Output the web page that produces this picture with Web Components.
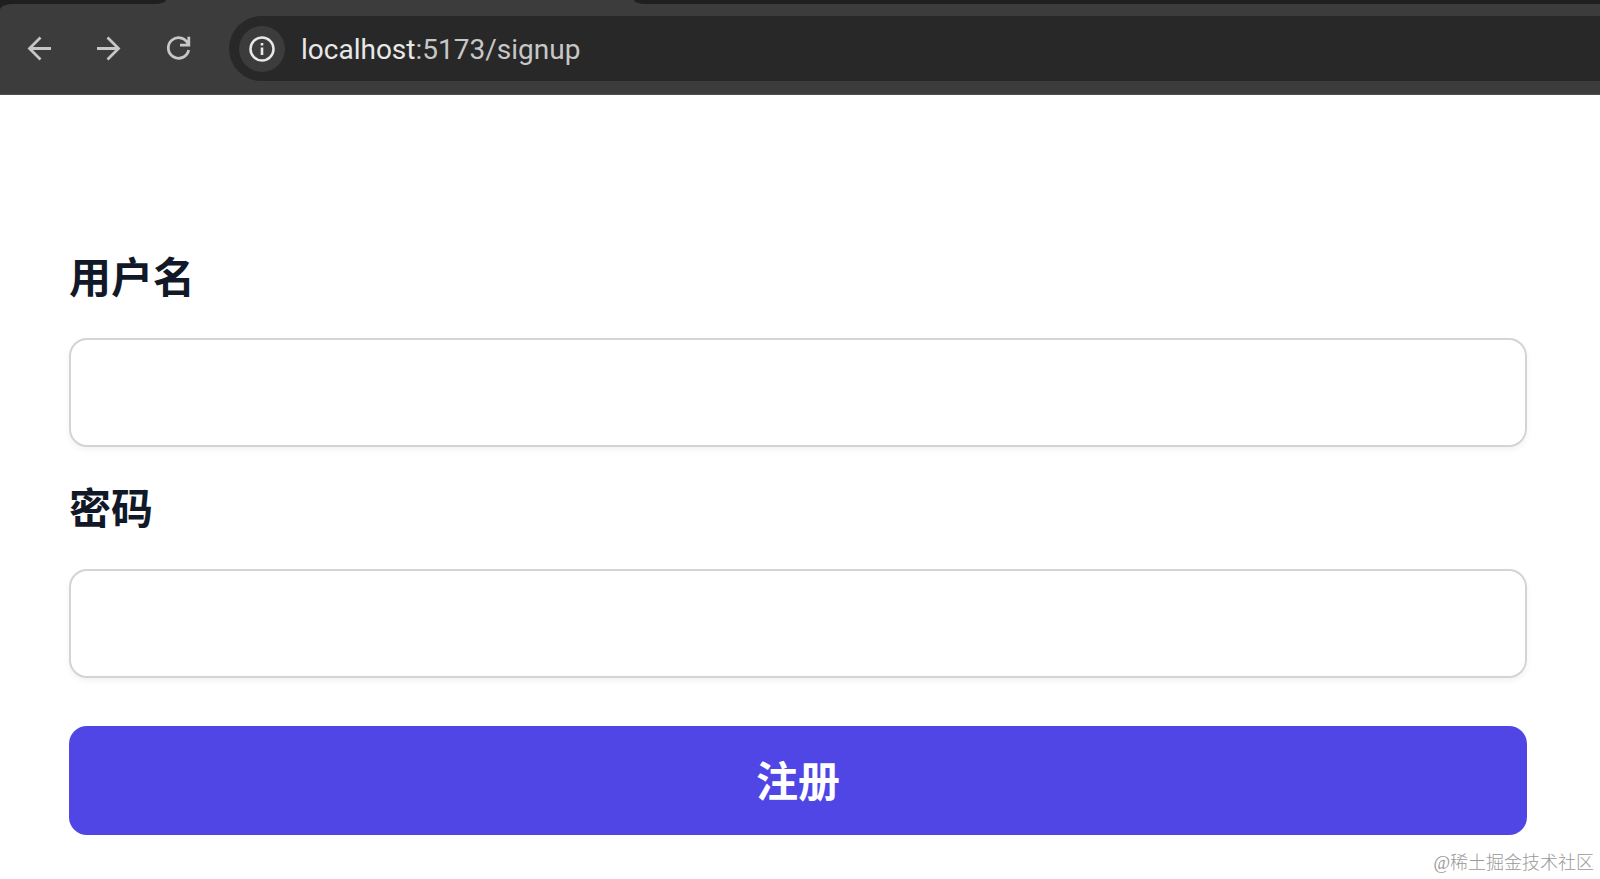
<!DOCTYPE html>
<html lang="zh-CN">
<head>
<meta charset="utf-8">
<meta name="viewport" content="width=device-width, initial-scale=1">
<title>注册</title>
<style>
  html, body { margin: 0; min-height: 100%; background: #fff; }
  body { font-family: "Noto Sans CJK SC", sans-serif; color: #111827; }
</style>
</head>
<body>
<browser-bar>
  <tool-button slot="nav" label="Back">
    <svg viewBox="0 0 33 33" fill="none" stroke="currentColor" stroke-width="2.8"><path d="M28 16.500H7M17.500 5.500 6.500 16.500l11 11"/></svg>
  </tool-button>
  <tool-button slot="nav" label="Forward">
    <svg viewBox="0 0 33 33" fill="none" stroke="currentColor" stroke-width="2.800"><path d="M4 16.500h21M14.500 5.500l11 11-11 11"/></svg>
  </tool-button>
  <tool-button slot="nav" label="Reload">
    <svg viewBox="0 0 33 33" fill="none" stroke="currentColor" stroke-width="2.800"><path d="M25.300 12.500A10.300 10.300 0 1 0 25.700 18M25.800 4.800v8.300H17"/></svg>
  </tool-button>
  <address-box host="localhost" path=":5173/signup"></address-box>
</browser-bar>
<signup-form>
  <form-field name="username" type="text">用户名</form-field>
  <form-field name="password" type="password">密码</form-field>
  <submit-button slot="action">注册</submit-button>
</signup-form>
<page-credit>@稀土掘金技术社区</page-credit>

<script>
  const define = (name, html, setup) => {
    const template = document.createElement('template');
    template.innerHTML = html;
    customElements.define(name, class extends HTMLElement {
      constructor() {
        super();
        this.attachShadow({ mode: 'open' }).append(template.content.cloneNode(true));
      }
      connectedCallback() {
        if (setup) setup(this, this.shadowRoot);
      }
    });
  };

  define('browser-bar', `
    <style>
      :host { display: block; background: #1f1f1f; color: #c7c7c7; }
      .strip { display: flex; height: 4px; background: #3c3c3c; }
      .before { width: 166px; background: #1f1f1f; border-bottom-right-radius: 12px 4px; }
      .active { width: 468px; }
      .after { flex: 1; background: #1f1f1f; border-bottom-left-radius: 12px 4px; }
      .tools { display: flex; align-items: center; box-sizing: border-box; height: 91px; padding: 12px 0 13px 23px; border-bottom: 1px solid #505050; border-top-left-radius: 12px 6px; background: #3c3c3c; }
      nav { display: flex; gap: 37px; margin-right: 33px; }
      ::slotted(address-box) { flex: 1; }
    </style>
    <div class="strip"><div class="before"></div><div class="active"></div><div class="after"></div></div>
    <div class="tools"><nav aria-label="Navigation"><slot name="nav"></slot></nav><slot></slot></div>
  `);

  define('tool-button', `
    <style>
      :host { display: block; }
      button { display: flex; width: 33px; height: 33px; padding: 0; border: 0; background: none; color: inherit; }
      ::slotted(svg) { width: 33px; height: 33px; }
    </style>
    <button type="button"><slot></slot></button>
  `, (host, root) => root.querySelector('button').setAttribute('aria-label', host.getAttribute('label')));

  define('address-box', `
    <style>
      :host { display: flex; align-items: center; gap: 16px; box-sizing: border-box; height: 65px; padding-left: 10px; background: #282828; border-radius: 33px 0 0 33px; font: 28px/36px Roboto, sans-serif; color: #c7c7c7; }
      button { display: flex; align-items: center; justify-content: center; width: 46px; height: 46px; padding: 0; border: 0; border-radius: 50%; background: #3c3c3c; color: #e8e8e8; }
      svg { width: 28px; height: 28px; }
      .url { flex: 1; padding-top: 2px; white-space: nowrap; }
      .host { color: #e8e8e8; }
    </style>
    <button type="button" aria-label="Site information">
      <svg viewBox="0 0 28 28"><circle cx="14" cy="14" r="11.500" fill="none" stroke="currentColor" stroke-width="2.500"/><path d="M12.700 12.500h2.600v7.500h-2.600zM12.700 8h2.600v2.600h-2.600z" fill="currentColor"/></svg>
    </button>
    <div class="url" role="textbox" aria-label="Address"><span class="host"></span><span class="path"></span></div>
  `, (host, root) => {
    root.querySelector('.host').textContent = host.getAttribute('host');
    root.querySelector('.path').textContent = host.getAttribute('path');
  });

  define('signup-form', `
    <style>
      :host { display: block; padding: 145px 73px 0 69px; }
      form { display: flex; flex-direction: column; gap: 48px; }
      .fields { display: flex; flex-direction: column; gap: 24px; }
    </style>
    <form><div class="fields"><slot></slot></div><slot name="action"></slot></form>
  `);

  define('form-field', `
    <style>
      :host { display: flex; flex-direction: column; gap: 28px; }
      label { font-size: 42px; font-weight: 700; line-height: 70px; }
      input { box-sizing: border-box; width: 100%; height: 109px; padding: 0 36px; border: 2px solid #d4d4d8; border-radius: 18px; background: #fff; box-shadow: 0 3px 6px rgba(0, 0, 0, 0.05); color: inherit; font: inherit; font-size: 42px; outline: 0; }
    </style>
    <label for="control"><slot></slot></label>
    <input id="control">
  `, (host, root) => {
    const input = root.querySelector('input');
    input.type = host.getAttribute('type');
    input.name = host.getAttribute('name');
  });

  define('submit-button', `
    <style>
      :host { display: block; }
      button { display: block; width: 100%; height: 109px; padding: 0 0 4px; border: 0; border-radius: 18px; background: #4f46e5; color: #fff; font: inherit; font-size: 42px; font-weight: 700; line-height: 70px; }
    </style>
    <button type="submit"><slot></slot></button>
  `);

  define('page-credit', `
    <style>
      :host { display: block; padding: 15px 6px 0 0; text-align: right; font: 300 18px/26px "Liberation Serif", "Noto Sans CJK SC", serif; color: #999; }
    </style>
    <slot></slot>
  `);
</script>
</body>
</html>
